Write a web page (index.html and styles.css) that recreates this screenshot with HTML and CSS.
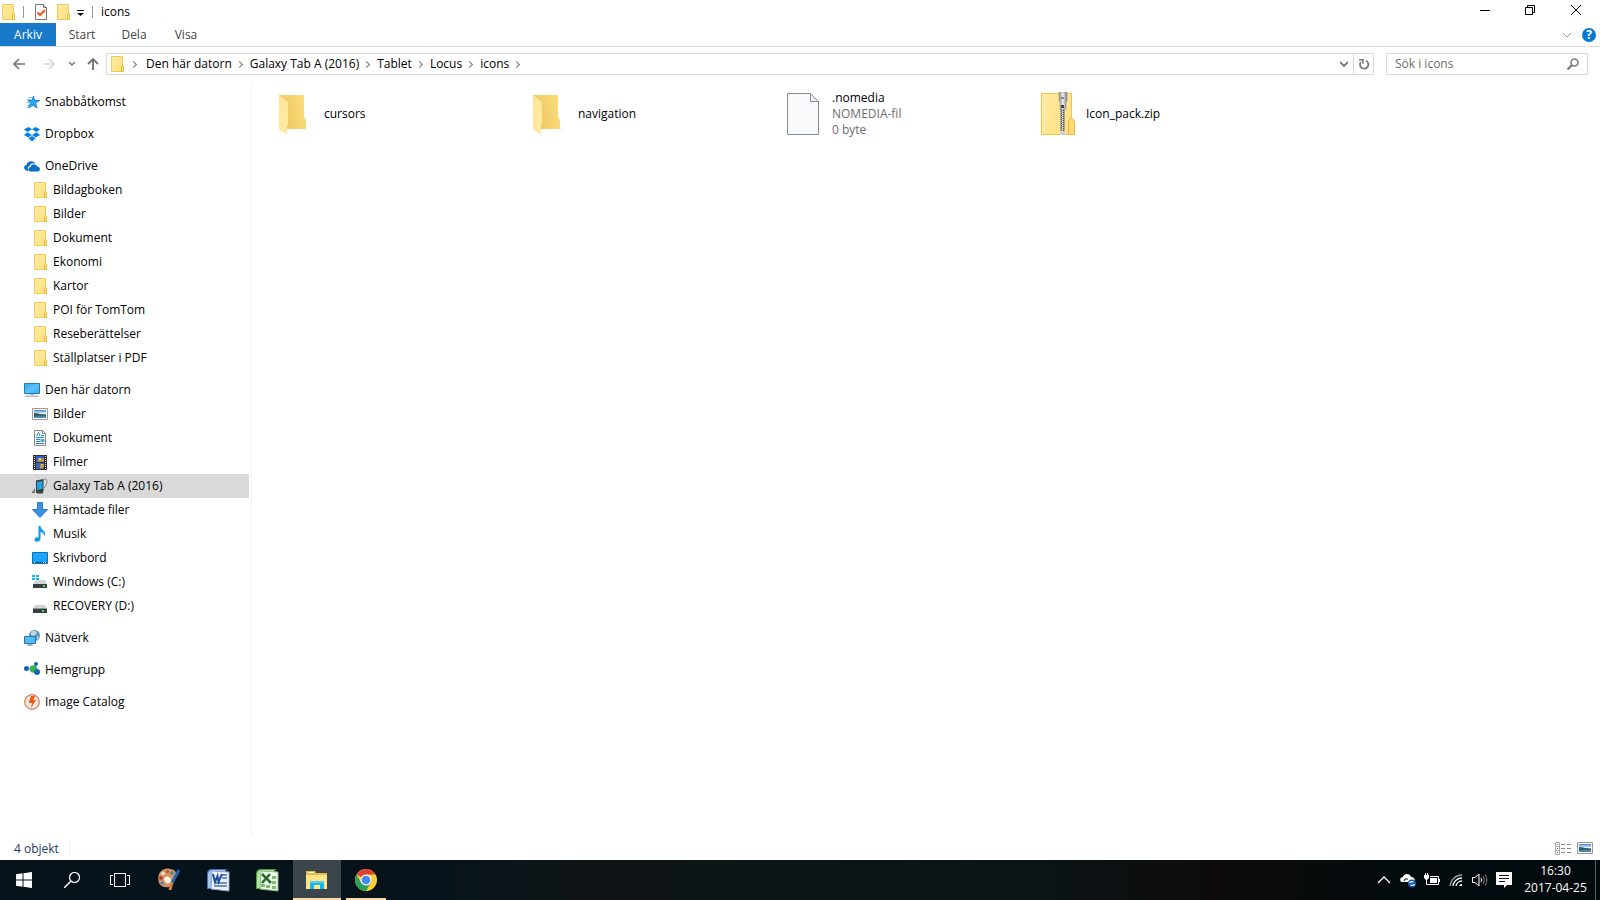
FILE: index.html
```html
<!DOCTYPE html>
<html lang="sv">
<head>
<meta charset="utf-8">
<title>icons</title>
<link rel="stylesheet" href="styles.css">
</head>
<body>
<svg class="sprite" aria-hidden="true">
  <defs>
    <linearGradient id="g-fold" x1="0" x2="1" y1="0" y2="1"><stop offset="0" stop-color="#ffeaa3"/><stop offset="1" stop-color="#ffe07d"/></linearGradient>
    <linearGradient id="g-back" x1="0" x2="1" y1="0.6" y2="0.3"><stop offset="0" stop-color="#ecc55f"/><stop offset="1" stop-color="#fbdc7b"/></linearGradient>
    <linearGradient id="g-front" x1="0" x2="1" y1="0" y2="1"><stop offset="0" stop-color="#ffe595"/><stop offset="1" stop-color="#ffeaa6"/></linearGradient>
    <linearGradient id="g-screen" x1="0" x2="1" y1="0" y2="1"><stop offset="0" stop-color="#2fa3f2"/><stop offset="0.5" stop-color="#5cc0fb"/><stop offset="1" stop-color="#37acf8"/></linearGradient>
    <linearGradient id="g-photo" x1="0" x2="0" y1="0" y2="1"><stop offset="0" stop-color="#3c86d8"/><stop offset="0.45" stop-color="#e9f3fa"/><stop offset="0.6" stop-color="#4c7a80"/><stop offset="1" stop-color="#4d8cba"/></linearGradient>
    <linearGradient id="g-zip" x1="0" x2="1" y1="0" y2="0"><stop offset="0" stop-color="#8d8d8d"/><stop offset="0.5" stop-color="#eeeeee"/><stop offset="1" stop-color="#777777"/></linearGradient>
  </defs>
  <symbol id="folder" viewBox="0 0 16 16"><path d="M2.500.5h11v9.500h1v5.500h-12z" fill="url(#g-fold)" stroke="#efcb5b"/><path d="M12.500 15.500v-4.500l1-1.500 1 1.500v4.500z" fill="#ffe48a" stroke="#e9bd3f"/></symbol>
  <symbol id="bigfolder" viewBox="0 0 32 42"><path d="M27 35h3l-3 1z" fill="#e4e4e4"/><path d="M0 1h25v22l2 3v9H8z" fill="url(#g-back)"/><path d="M0 1l9 7v22l-1 2v9l-8-6z" fill="url(#g-front)"/></symbol>
  <symbol id="star" viewBox="0 0 16 16"><path d="M9.500 2l1 4.500h5l-4 2.500 1.500 5-4-3-4.500 3 2-5L4 6.500h4z" fill="#2eaaf4" stroke="#1583cf"/><path d="M4 3.500h4M3 5.500h4M2 8.500h4M3 11.500h2M2 13.500h3" stroke="#8accf3"/></symbol>
  <symbol id="dropbox" viewBox="0 0 16 16"><path d="M4.500 1L8 3.300 3.500 6 0 3.500zM11.500 1L16 3.500 12.500 6 8 3.300zM3.500 6.300L8 9l-3.500 2.500L0 9zM12.500 6.300L16 9l-4.500 2.500L8 9zM4.500 12.200L8 10l3.500 2.200L8 15.500z" fill="#0081e8"/></symbol>
  <symbol id="cloud" viewBox="0 0 16 16"><path d="M1.500 12C-.8 10.500 0 7 2.600 7 3 3 9 1.500 11.500 5.500 8 4.500 6 6 5.800 8 3.600 8 3 11 4.500 13H3z" fill="#0a6fc7"/><path d="M6.500 13.500C3.400 13 4 9 6.700 9 7 5.500 12 5.200 13 8.600c3.500 0 4 4.500.8 4.900z" fill="#0a6fc7"/></symbol>
  <symbol id="monitor" viewBox="0 0 16 16"><path d="M.5 1.500h15v10H.5z" fill="url(#g-screen)" stroke="#237aae"/><path d="M6 12h4v1H6z" fill="#98b4c4"/><path d="M2 13.500h12l1.500 1.500H.5z" fill="#a7bdca"/></symbol>
  <symbol id="photo" viewBox="0 0 16 16"><path d="M.5 2.500h15v11H.5z" fill="#fff" stroke="#999"/><path d="M2 4h12v8H2z" fill="url(#g-photo)"/><path d="M2 7c3 0 6 1 12 2v1l-5-.5-7 1z" fill="#31615f"/></symbol>
  <symbol id="document" viewBox="0 0 16 16"><path d="M2.500.5h8l3 3v12h-11z" fill="#fff" stroke="#888"/><path d="M10.500.5v3h3" fill="none" stroke="#888"/><path d="M4.500 6l2-3.500L8 6M9 5.500h3M4 7.500h8M4 9.500h4M4 11.500h4M4 13.500h8" fill="none" stroke="#1986c8"/><path d="M8.500 9h4v3h-4z" fill="#62a2be"/></symbol>
  <symbol id="film" viewBox="0 0 16 16"><path d="M1 1h14v15H1z" fill="#303033"/><path d="M4 2h8v6H4zM4 9h8v6H4z" fill="#3f64b7"/><path d="M6 8V4l3 1 3-1v3l-2 1zM8 15v-4l4-1v3z" fill="#c99932"/><path d="M7 4h2v2H7zM9 10h2v1H9z" fill="#b3d2d6"/><path d="M2.500 2v13M13.500 2v13" stroke="#ddd" stroke-dasharray="1 1"/></symbol>
  <symbol id="device" viewBox="0 0 16 16"><path d="M4 2.500L11.500 1v12.500L4 15z" fill="#333b40"/><path d="M5 4l5.500-1v8L5 12z" fill="#20a3e9"/><path d="M12 10c4-5 4-10 0-9-1 .5-1 1.500 0 2" fill="none" stroke="#878787"/><path d="M0 14l3-4v5H0z" fill="#777"/><path d="M5 12.500h6v3H5z" fill="#444"/></symbol>
  <symbol id="download" viewBox="0 0 16 16"><path d="M5.500.5h5v7h5L8 15.500.5 7.500h5z" fill="#3a93e2" stroke="#2a7bc4"/></symbol>
  <symbol id="note" viewBox="0 0 16 16"><path d="M6.500 0h2c0 4 5 4 4.500 8.500l-1 2c0-3-1-4-3.500-4.500V13c0 3-6 4-6 1s3-3 4-2.500z" fill="#0a9af2"/></symbol>
  <symbol id="desktop" viewBox="0 0 16 16"><path d="M.5 2.500h15v11H.5z" fill="#1ca3fb" stroke="#0873b8"/><path d="M1 12.500h14" stroke="#0b568d"/><path d="M2 12.500h1M11 12.500h1M13 12.500h1" stroke="#fff"/></symbol>
  <symbol id="disk" viewBox="0 0 16 16"><path d="M3 7h10l2 3.500H1z" fill="#d2d3d4"/><path d="M1 10.500h14V15H1z" fill="#393e40"/><path d="M10 12h2v2h-2z" fill="#36e44a"/></symbol>
  <symbol id="windisk" viewBox="0 0 16 16"><path d="M4 6h9l2 4H1z" fill="#d2d3d4"/><path d="M1 10h14v4H1z" fill="#393e40"/><path d="M11 11h2v2h-2z" fill="#36e44a"/><path d="M0 1h3v2H0zM4 1h3v2H4zM0 4h3v2H0zM4 4h3v2H4z" fill="#12b7ed"/></symbol>
  <symbol id="network" viewBox="0 0 16 16"><circle cx="10.500" cy="5.500" r="5.500" fill="#5d98b9"/><path d="M7 2q4-3 6 1l-3 3-3-1zM13 6l2 1-2 3z" fill="#b8d7e2"/><path d="M.5 6.500h11v7H.5z" fill="#53baf8" stroke="#2576ad"/><path d="M4 14.500h4M3 15.500h6" stroke="#9eb6c2"/></symbol>
  <symbol id="homegroup" viewBox="0 0 16 16"><path d="M2 6.500h8l2-4M10 7l3 3" stroke="#9bb7c6" fill="none"/><circle cx="9.500" cy="7" r="3.800" fill="#35b34a"/><circle cx="2.500" cy="6.500" r="2.500" fill="#1764b4"/><circle cx="12" cy="2" r="2" fill="#1764b4"/><circle cx="13" cy="10" r="3" fill="#1764b4"/></symbol>
  <symbol id="bolt" viewBox="0 0 16 16"><circle cx="8" cy="8" r="7.300" fill="#ece8e5" stroke="#d78556" stroke-width="1.300"/><path d="M7 2h4L9.500 6H12l-5 8 1-5H4.500z" fill="#f05a13"/></symbol>
  <symbol id="words" viewBox="0 0 24 24"><path d="M1 6q0-5 5-5h16q-3 1-3 6v14H1z" fill="#496fb4"/><path d="M2 7q0-5 5-5h12l-4 18H2z" fill="#a9c4e9"/><path d="M6 3l17 1v19L5 21z" fill="#eef3fb" stroke="#8ba6d4"/><path d="M16 7h5M16 10h5M9 15h12M8 18h13" stroke="#4b70b5" stroke-width="1.500"/><path d="M7 6l2 8 2.500-6 1 6L16 6" fill="none" stroke="#214b9b" stroke-width="2"/></symbol>
  <symbol id="sheets" viewBox="0 0 24 24"><path d="M1 6q0-5 5-5h16q-3 1-3 6v14H1z" fill="#4b9b3c"/><path d="M2 7q0-5 5-5h12l-4 18H2z" fill="#b4dfa6"/><path d="M6 3l17 1v19L5 21z" fill="#eff8ed" stroke="#8bbc7f"/><path d="M17 8h4v3h-4zM17 13h4v3h-4zM11 17h4v3h-4zM17 18h4v3h-4zM6 16h4v3H6z" fill="#7fba70"/><path d="M7 6l9 9M15 6l-8 9" fill="none" stroke="#286b2c" stroke-width="2.500"/></symbol>
</svg>

<div class="window">
  <header class="titlebar">
    <div class="quick">
      <svg class="i16"><use href="#folder"/></svg>
      <span class="sep"></span>
      <button class="plain" aria-label="Egenskaper"><svg class="i16" viewBox="0 0 16 16"><path d="M2.500.5h8l3 3v12h-11z" fill="#f8f8f8" stroke="#777"/><path d="M10.500.5v3h3" fill="#ddd" stroke="#777"/><path d="M4.500 8.500L7 11l5-5" fill="none" stroke="#f05a1a" stroke-width="2"/></svg></button>
      <button class="plain newfolder" aria-label="Ny mapp"><svg class="i16"><use href="#folder"/></svg></button>
      <button class="plain" aria-label="Anpassa"><svg class="custom" viewBox="0 0 8 8"><path d="M0 2.500h7" stroke="#111"/><path d="M0 5h7L3.500 8z" fill="#111"/></svg></button>
      <span class="sep"></span>
      <h1 class="title">icons</h1>
    </div>
    <div class="winbtns">
      <button class="plain" aria-label="Minimera"><svg viewBox="0 0 10 10"><path d="M0 5.500h10" stroke="#000"/></svg></button>
      <button class="plain" aria-label="Återställ"><svg viewBox="0 0 10 10"><path d="M.5 2.500h7v7h-7zM2.500 2V.5h7v7H8" fill="none" stroke="#000"/></svg></button>
      <button class="plain" aria-label="Stäng"><svg viewBox="0 0 10 10"><path d="M0 0l10 10M10 0L0 10" stroke="#000"/></svg></button>
    </div>
  </header>

  <nav class="ribbon">
    <button class="tab file">Arkiv</button>
    <button class="tab">Start</button>
    <button class="tab">Dela</button>
    <button class="tab">Visa</button>
    <button class="plain expand" aria-label="Expandera"><svg class="chev" viewBox="0 0 8 6"><path d="M0 1l4 4 4-4" fill="none" stroke="#999"/></svg></button>
    <button class="plain help" aria-label="Hjälp"><span>?</span></button>
  </nav>

  <div class="address">
    <button class="plain nav" aria-label="Bakåt"><svg class="arrow" viewBox="0 0 12 12"><path d="M12 6H1M6 1L1 6l5 5" fill="none" stroke="#757575" stroke-width="1.700"/></svg></button>
    <button class="plain nav" aria-label="Framåt"><svg class="arrow" viewBox="0 0 12 12"><path d="M0 6h11M6 1l5 5-5 5" fill="none" stroke="#dcdcdc" stroke-width="1.700"/></svg></button>
    <button class="plain recent" aria-label="Senaste"><svg class="tiny" viewBox="0 0 6 6"><path d="M0 1l3 3 3-3" fill="none" stroke="#777" stroke-width="1.500"/></svg></button>
    <button class="plain up" aria-label="Upp"><svg class="arrow" viewBox="0 0 12 12"><path d="M6 12V1M1 6l5-5 5 5" fill="none" stroke="#757575" stroke-width="1.900"/></svg></button>
    <div class="crumbs">
      <svg class="i16"><use href="#folder"/></svg>
      <span class="arr"></span><a href="#">Den här datorn</a>
      <span class="arr"></span><a href="#">Galaxy Tab A (2016)</a>
      <span class="arr"></span><a href="#">Tablet</a>
      <span class="arr"></span><a href="#">Locus</a>
      <span class="arr"></span><a href="#">icons</a>
      <span class="arr"></span>
      <button class="plain history" aria-label="Tidigare platser"><svg class="chev" viewBox="0 0 8 6"><path d="M0 1l4 4 4-4" fill="none" stroke="#777" stroke-width="1.800"/></svg></button>
      <button class="plain refresh" aria-label="Uppdatera"><svg viewBox="0 0 12 12"><path d="M8 2.700A4.200 4.200 0 1 1 2.800 4" fill="none" stroke="#777" stroke-width="1.700"/><path d="M1 1.800h4v4" fill="none" stroke="#777" stroke-width="1.600"/></svg></button>
    </div>
    <div class="search">
      <input type="text" aria-label="Sök" placeholder="Sök i icons">
      <svg viewBox="0 0 12 12"><circle cx="7.500" cy="4.500" r="3.500" fill="none" stroke="#777" stroke-width="1.500"/><path d="M5 7l-4.500 4.500" stroke="#777" stroke-width="2"/></svg>
    </div>
  </div>

  <div class="body">
    <nav class="side">
      <ul class="group"><li><a href="#"><svg class="i16"><use href="#star"/></svg>Snabbåtkomst</a></li></ul>
      <ul class="group"><li><a href="#"><svg class="i16"><use href="#dropbox"/></svg>Dropbox</a></li></ul>
      <ul class="group">
        <li><a href="#"><svg class="i16"><use href="#cloud"/></svg>OneDrive</a></li>
        <li class="sub"><a href="#"><svg class="i16"><use href="#folder"/></svg>Bildagboken</a></li>
        <li class="sub"><a href="#"><svg class="i16"><use href="#folder"/></svg>Bilder</a></li>
        <li class="sub"><a href="#"><svg class="i16"><use href="#folder"/></svg>Dokument</a></li>
        <li class="sub"><a href="#"><svg class="i16"><use href="#folder"/></svg>Ekonomi</a></li>
        <li class="sub"><a href="#"><svg class="i16"><use href="#folder"/></svg>Kartor</a></li>
        <li class="sub"><a href="#"><svg class="i16"><use href="#folder"/></svg>POI för TomTom</a></li>
        <li class="sub"><a href="#"><svg class="i16"><use href="#folder"/></svg>Reseberättelser</a></li>
        <li class="sub"><a href="#"><svg class="i16"><use href="#folder"/></svg>Ställplatser i PDF</a></li>
      </ul>
      <ul class="group">
        <li><a href="#"><svg class="i16"><use href="#monitor"/></svg>Den här datorn</a></li>
        <li class="sub"><a href="#"><svg class="i16"><use href="#photo"/></svg>Bilder</a></li>
        <li class="sub"><a href="#"><svg class="i16"><use href="#document"/></svg>Dokument</a></li>
        <li class="sub"><a href="#"><svg class="i16"><use href="#film"/></svg>Filmer</a></li>
        <li class="sub selected"><a href="#"><svg class="i16"><use href="#device"/></svg>Galaxy Tab A (2016)</a></li>
        <li class="sub"><a href="#"><svg class="i16"><use href="#download"/></svg>Hämtade filer</a></li>
        <li class="sub"><a href="#"><svg class="i16"><use href="#note"/></svg>Musik</a></li>
        <li class="sub"><a href="#"><svg class="i16"><use href="#desktop"/></svg>Skrivbord</a></li>
        <li class="sub"><a href="#"><svg class="i16"><use href="#windisk"/></svg>Windows (C:)</a></li>
        <li class="sub"><a href="#"><svg class="i16"><use href="#disk"/></svg>RECOVERY (D:)</a></li>
      </ul>
      <ul class="group"><li><a href="#"><svg class="i16"><use href="#network"/></svg>Nätverk</a></li></ul>
      <ul class="group"><li><a href="#"><svg class="i16"><use href="#homegroup"/></svg>Hemgrupp</a></li></ul>
      <ul class="group"><li><a href="#"><svg class="i16"><use href="#bolt"/></svg>Image Catalog</a></li></ul>
    </nav>

    <main class="files">
      <a class="tile" href="#"><svg class="thumb" viewBox="0 0 38 44"><use href="#bigfolder" y="2" width="32" height="42"/></svg><span>cursors</span></a>
      <a class="tile" href="#"><svg class="thumb" viewBox="0 0 38 44"><use href="#bigfolder" y="2" width="32" height="42"/></svg><span>navigation</span></a>
      <a class="tile" href="#"><svg class="thumb" viewBox="0 0 38 44"><path d="M.5 1.500h23l8 8v33H.5z" fill="#f7f9fa" stroke="#8b8e90"/><path d="M23.500 1.500v8h8z" fill="#e9edf0" stroke="#8b8e90"/></svg><span>.nomedia<small>NOMEDIA-fil</small><small>0 byte</small></span></a>
      <a class="tile" href="#"><svg class="thumb" viewBox="0 0 38 44"><path d="M.5 1.500h30v25l3 3v13H.5z" fill="url(#g-fold)" stroke="#eac44f"/><path d="M3.500 4v36" stroke="#fff3c8"/><path d="M27.500 42.500v-13l3-4 3 4v13z" fill="#ffd976" stroke="#e5b83b"/><path d="M19 17h5v26h-5z" fill="#aaa69a"/><path d="M20.500 17v22" stroke="#555" stroke-dasharray="1 1"/><path d="M22.500 18v21" stroke="#555" stroke-dasharray="1 1"/><path d="M21.500 17v22" stroke="#e5e5e5" stroke-dasharray="1 1"/><path d="M18 0h8v8l-1 3v6h-6v-6l-1-3z" fill="url(#g-zip)" stroke="#888" stroke-width=".5"/><path d="M20 5h3v2h-3z" fill="#888"/><path d="M20 13h3v3h-3z" fill="#444"/><path d="M19 39h5v4h-5z" fill="#d0d0d0"/></svg><span>Icon_pack.zip</span></a>
    </main>
  </div>

  <footer class="status">
    <span class="count">4 objekt</span>
    <button class="plain" aria-label="Detaljer"><svg class="i16" viewBox="0 0 16 14"><path d="M.5 1.500h4v12h-4zM.5 5.500h4M.5 9.500h4" fill="none" stroke="#aaa"/><path d="M2 3.500h1M2 7.500h1" stroke="#37a"/><path d="M2 11.500h1" stroke="#c22"/><path d="M6 3.500h4M12 3.500h4M6 7.500h4M12 7.500h4M6 11.500h4M12 11.500h4" stroke="#888"/></svg></button>
    <button class="plain" aria-label="Stora ikoner"><svg class="i16" viewBox="0 0 16 16"><use href="#photo"/></svg></button>
  </footer>
</div>

<div class="taskbar">
  <button class="app" aria-label="Start"><svg class="s16" viewBox="0 0 16 16"><path d="M0 2.300L6.500 1.300V7.500H0zM7.500 1.200L16 0v7.500H7.500zM0 8.500h6.500v6.200L0 13.700zM7.500 8.500H16V16l-8.500-1.200z" fill="#fff"/></svg></button>
  <button class="app" aria-label="Sök i Windows"><svg class="s16" viewBox="0 0 16 16"><circle cx="10.500" cy="5.500" r="5" fill="none" stroke="#fff" stroke-width="1.200"/><path d="M7 9L0 16" stroke="#fff" stroke-width="1.400"/></svg></button>
  <button class="app" aria-label="Aktivitetsvyn"><svg class="view" viewBox="0 0 20 14"><path d="M4.500.5h11v13h-11zM3 2.500H.5v9H3M17 2.500h2.500v9H17" fill="none" stroke="#fff"/></svg></button>
  <button class="app pinned" aria-label="Paint"><svg class="s24" viewBox="0 0 24 24"><path d="M2 15C-1 5 6-1 13 1c6 0 8 6 5 10-2 2-2 7-6 8-4 1-8 0-10-4z" fill="#cf9468"/><path d="M7 12c0-5 7-4 7 0 0 3-3 4-5 3z" fill="#fff3db"/><circle cx="4" cy="10" r="1.800" fill="#aa352b"/><circle cx="6" cy="5.500" r="1.800" fill="#e8e0d0"/><circle cx="10.500" cy="3.500" r="1.600" fill="#c94a33"/><circle cx="15" cy="5" r="1.800" fill="#3f8b8a"/><circle cx="5" cy="15" r="1.500" fill="#5a77a8"/><path d="M22 2l-7 13" stroke="#2461b2" stroke-width="3"/><path d="M15 14l-2 8" stroke="#cb8242" stroke-width="3"/></svg></button>
  <button class="app pinned" aria-label="Word"><svg class="s24"><use href="#words"/></svg></button>
  <button class="app pinned" aria-label="Excel"><svg class="s24"><use href="#sheets"/></svg></button>
  <button class="app pinned active" aria-label="Utforskaren"><svg class="s24" viewBox="0 0 24 24"><path d="M1 3h9l1 2h11v16H1z" fill="#e9b945"/><path d="M1 7h21v14H1z" fill="#ffe488"/><path d="M3 4h6v1H3z" fill="#fff"/><path d="M5 21v-8h14v8h-4v-4H9v4z" fill="#18b5ed"/><path d="M5 13h14v2H5z" fill="#51cff6"/></svg></button>
  <button class="app pinned running" aria-label="Chrome"><svg class="s24" viewBox="0 0 24 24"><circle cx="12" cy="12" r="11" fill="#fbcf35"/><path d="M12 12L2.500 6.500A11 11 0 0 1 21.500 6.500H12z" fill="#dc4437"/><path d="M2.500 6.500A11 11 0 0 0 12 23l4.800-8.200L7.200 14.800z" fill="#28a05a"/><circle cx="12" cy="12" r="5.500" fill="#f5f5f5"/><circle cx="12" cy="12" r="4.300" fill="#4688f1"/></svg></button>
  <div class="tray">
    <button class="plain" aria-label="Visa dolda ikoner"><svg viewBox="0 0 16 16"><path d="M2 11l6-6 6 6" fill="none" stroke="#fff" stroke-width="1.300"/></svg></button>
    <button class="plain" aria-label="OneDrive"><svg viewBox="0 0 16 16"><path d="M1 10C-1 7 1 5 3 5c1-4 7-4 8 0 3 0 4 2 4 5z" fill="#fff"/><path d="M4 9q0-3 4-2" fill="none" stroke="#111"/><circle cx="12" cy="11.500" r="4" fill="#1856b5"/><path d="M9.500 11q1-2 4-1M14.500 12q-1 2-4 1" fill="none" stroke="#fff" stroke-width="1.200"/></svg></button>
    <button class="plain" aria-label="Batteri"><svg viewBox="0 0 16 16"><path d="M6 4.500h8.500v8H4.500M15.500 7v3M2.500 7v5.500H5M1.500 1v3M3.500 1v3" fill="none" stroke="#fff"/><path d="M0 3h5v3L3 8H2L0 6z" fill="#fff"/><path d="M6 6h7v5H6z" fill="#fff"/></svg></button>
    <button class="plain" aria-label="Nätverk"><svg viewBox="0 0 16 16"><path d="M2 14A12 12 0 0 1 14 3" fill="none" stroke="#999" stroke-width="1.300"/><path d="M5 14a9 9 0 0 1 9-8M8 14a6 6 0 0 1 6-5" fill="none" stroke="#fff" stroke-width="1.300"/><path d="M11 14a3 3 0 0 1 3-2v2z" fill="#fff"/></svg></button>
    <button class="plain" aria-label="Volym"><svg viewBox="0 0 16 16"><path d="M.5 5.500H3l4-3.500v12l-4-3.500H.500z" fill="none" stroke="#fff"/><path d="M9 6q1.500 2 0 4" fill="none" stroke="#fff"/><path d="M11 4q3 4 0 8M13 2.500q4 5.500 0 11" fill="none" stroke="#888"/></svg></button>
    <button class="plain" aria-label="Åtgärdscenter"><svg viewBox="0 0 16 16"><path d="M0 0h16v13h-5l-3 3v-3H0z" fill="#fff"/><path d="M3 3.500h10M3 6.500h10M3 9.500h6" stroke="#07131a"/></svg></button>
    <div class="clock"><time>16:30</time><time>2017-04-25</time></div>
  </div>
</div>
</body>
</html>
```
FILE: styles.css
```css
* { box-sizing: border-box; }
body {
  margin: 0;
  height: 100vh;
  display: flex;
  flex-direction: column;
  background: #fff;
  color: #000;
  font: 12px/16px "Open Sans", "Noto Sans", sans-serif;
  overflow: hidden;
}
svg { display: block; flex: none; }
a { color: inherit; text-decoration: none; }
ul { list-style: none; margin: 0; padding: 0; }
button, input { font: inherit; color: inherit; }
.sprite { position: absolute; width: 0; height: 0; }
.plain {
  display: flex;
  align-items: center;
  justify-content: center;
  border: 0;
  padding: 0;
  background: none;
}
.i16, .s16 { width: 16px; height: 16px; }
.s24 { width: 24px; height: 24px; }
.window { flex: 1; display: flex; flex-direction: column; min-height: 0; }

.titlebar { display: flex; justify-content: space-between; height: 23px; }
.quick { display: flex; align-items: center; }
.sep { width: 1px; height: 12px; background: #999; margin: 0 9px 0 7px; }
.newfolder { margin: 0 6px; }
.custom { width: 8px; height: 8px; }
.title { margin: 0 -1px; font-size: 12px; font-weight: 400; }
.winbtns { display: flex; }
.winbtns .plain { width: 45px; height: 20px; }
.winbtns .plain:last-child { width: 48px; }
.winbtns svg { width: 10px; height: 10px; }

.ribbon { display: flex; align-items: stretch; height: 24px; border-bottom: 1px solid #dadbdc; }
.tab { border: 0; padding: 0 12px; background: none; color: #444; min-width: 52px; }
.tab.file { background: #1979ca; color: #fff; width: 56px; }
.expand { margin: 0 7px 0 auto; }
.chev { width: 8px; height: 6px; }
.help { width: 22px; }
.help span { width: 14px; height: 14px; border-radius: 50%; background: #0578d3; color: #fff; font-weight: 700; line-height: 14px; }

.address { display: flex; height: 35px; padding: 6px 12px 7px 4px; align-items: center; }
.nav { width: 30px; height: 22px; }
.arrow { width: 12px; height: 12px; }
.recent { width: 16px; height: 22px; }
.tiny { width: 6px; height: 6px; }
.up { width: 26px; height: 22px; }
.crumbs { flex: 1; display: flex; align-items: center; height: 22px; border: 1px solid #d9d9d9; padding-left: 2px; }
.arr { width: 5px; height: 5px; border: solid #777; border-width: 1px 1px 0 0; transform: rotate(45deg); margin: 0 8px 0 5px; }
.i16 + .arr { margin: 0 10px 0 6px; }
.history { margin-left: auto; width: 19px; height: 20px; }
.refresh { width: 20px; height: 20px; border-left: 1px solid #d9d9d9; }
.refresh svg { width: 12px; height: 12px; }
.search { display: flex; align-items: center; width: 202px; height: 22px; margin-left: 12px; padding: 0 8px; border: 1px solid #d9d9d9; }
.search input { flex: 1; min-width: 0; border: 0; padding: 0; outline: 0; background: none; }
.search input::placeholder { color: #6d6d6d; opacity: 1; }
.search svg { width: 12px; height: 12px; }

.body { flex: 1; display: flex; min-height: 0; }
.side { width: 252px; padding: 8px 2px 0 0; border-right: 1px solid #f2f2f2; }
.group { margin-bottom: 8px; }
.group a { display: flex; align-items: center; gap: 5px; height: 24px; padding-left: 24px; white-space: nowrap; }
.group .sub a { padding-left: 32px; }
.selected { background: #d9d9d9; }
.files { flex: 1; display: grid; grid-template-columns: repeat(auto-fill, 254px); align-content: start; padding: 8px 0 0 27px; }
.tile { display: flex; align-items: center; gap: 7px; height: 48px; }
.thumb { width: 38px; height: 44px; }
.tile small { display: block; font-size: 12px; color: #6d6d6d; }

.status { display: flex; align-items: center; height: 24px; padding: 0 7px 0 14px; gap: 6px; color: #1e395b; }
.count { margin-right: auto; padding: 2px 10px 0 0; border-right: 1px solid #f0f0f0; line-height: 12px; }

.taskbar { display: flex; height: 40px; background: linear-gradient(90deg, #07131a 0, #07131a 28%, #0f1517 36%, #0b1316 65%, #0d0c0b 76%, #020a0d 88%); color: #fff; }
.app { display: flex; align-items: center; justify-content: center; width: 48px; padding: 0; border: 0; background: none; }
.pinned { margin-left: 1px; }
.view { width: 20px; height: 14px; }
.active { margin-left: 2px; background: #3b454b; border-bottom: 2px solid #fdd7a4; padding-top: 2px; }
.running { background: linear-gradient(#fdd7a4, #fdd7a4) center bottom / 40px 2px no-repeat; }
.tray { display: flex; align-items: center; margin-left: auto; padding-right: 4px; }
.tray .plain { width: 24px; height: 40px; }
.tray svg { width: 16px; height: 16px; }
.clock { display: flex; flex-direction: column; justify-content: center; align-items: center; width: 80px; height: 40px; padding-bottom: 2px; line-height: 17px; border-right: 1px solid #53606a; }
```
